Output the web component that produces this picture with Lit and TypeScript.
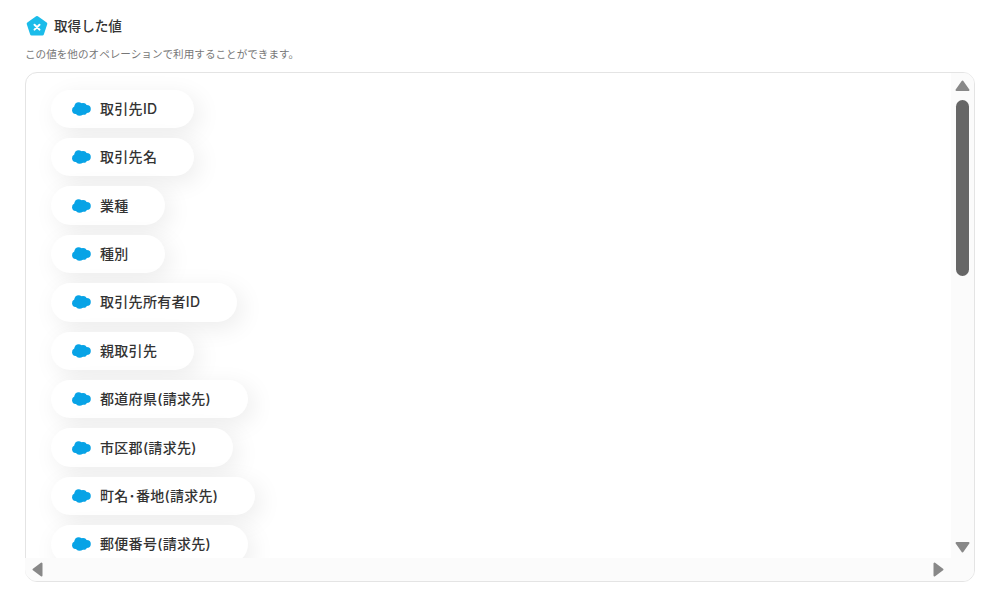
import { LitElement, html, css } from 'lit';
import { customElement } from 'lit/decorators.js';

const FIELDS = [
  '取引先ID',
  '取引先名',
  '業種',
  '種別',
  '取引先所有者ID',
  '親取引先',
  '都道府県(請求先)',
  '市区郡(請求先)',
  '町名･番地(請求先)',
  '郵便番号(請求先)',
];

const cloud = html`<svg class="cloud" viewBox="0 0 19 14" aria-hidden="true">
  <g fill="#08a3e6">
    <circle cx="6.6" cy="4.6" r="4.3"></circle>
    <circle cx="11" cy="4.8" r="3.9"></circle>
    <ellipse cx="14.6" cy="7" rx="4.2" ry="4"></ellipse>
    <ellipse cx="3.6" cy="8.2" rx="3.5" ry="3.7"></ellipse>
    <circle cx="7.6" cy="9.8" r="4"></circle>
    <circle cx="11.6" cy="9.4" r="3.4"></circle>
  </g>
</svg>`;

@customElement('app-root')
export class AppRoot extends LitElement {
  static styles = css`
    :host {
      display: block;
      height: 589px;
      overflow: hidden;
      background: #fff;
      color: #333;
      font-family: 'Inter', 'Noto Sans CJK JP', sans-serif;
      box-sizing: border-box;
      padding: 14px 24px 7px 25px;
    }

    .head {
      display: flex;
      align-items: center;
      gap: 6px;
      height: 24px;
      padding-left: 1px;
    }

    .logo {
      width: 22px;
      height: 22px;
      flex: none;
    }

    .title {
      font-size: 13.6px;
      font-weight: 500;
      line-height: 22px;
    }

    .sub {
      margin: 9px 0 0;
      font-size: 10.6px;
      line-height: 16px;
      color: #777;
    }

    .box {
      margin-top: 9px;
      height: 510px;
      box-sizing: border-box;
      border: 1px solid #e4e4e4;
      border-radius: 12px;
      display: grid;
      grid-template-columns: 1fr 23px;
      grid-template-rows: 1fr 23px;
      background: #fff;
    }

    .list {
      overflow: hidden;
      padding: 16.7px 0 0 25px;
      display: flex;
      flex-direction: column;
      align-items: flex-start;
      gap: 10px;
      min-height: 0;
    }

    .pill {
      flex: none;
      display: flex;
      align-items: center;
      gap: 9px;
      height: 38.4px;
      padding: 0 36.5px 0 21px;
      border-radius: 20px;
      background: #fff;
      box-shadow: 5px 6px 24px rgba(0, 0, 0, 0.08);
      font-size: 14px;
      font-weight: 500;
      letter-spacing: 0.3px;
      white-space: nowrap;
    }

    .pill span {
      padding-bottom: 2px;
    }

    .cloud {
      width: 19px;
      height: 14px;
      flex: none;
    }

    .vbar,
    .hbar,
    .corner {
      background: #fbfbfb;
      position: relative;
      z-index: 1;
    }

    .vbar {
      display: flex;
      flex-direction: column;
      align-items: center;
      padding: 7px 0 5px;
      grid-row: 1;
      grid-column: 2;
      border-top-right-radius: 10px;
      box-sizing: border-box;
    }

    .thumb {
      width: 13px;
      height: 176px;
      margin-top: 9px;
      border-radius: 7px;
      background: #666;
    }

    .spacer {
      flex: 1;
    }

    .hbar {
      grid-row: 2;
      grid-column: 1;
      margin-left: -1px;
      display: flex;
      align-items: center;
      justify-content: space-between;
      padding: 0 7px 1px 7px;
      border-bottom-left-radius: 12px;
    }

    .corner {
      grid-row: 2;
      grid-column: 2;
      border-bottom-right-radius: 11px;
    }

    .arrow {
      display: block;
      fill: #888;
      stroke: #888;
      stroke-linejoin: round;
      stroke-width: 2;
    }
  `;

  render() {
    return html`
      <div class="head">
        <svg class="logo" viewBox="0 0 22 22" aria-hidden="true">
          <path
            d="M11 2.5 L19.8 8.8 L16.4 19 L5.6 19 L2.2 8.8 Z"
            fill="#1bbcea"
            stroke="#1bbcea"
            stroke-width="3"
            stroke-linejoin="round"
          ></path>
          <path d="M8.5 9.8 L13.5 14.6 M13.5 9.8 L8.5 14.6" stroke="#fff" stroke-width="2" stroke-linecap="round"></path>
        </svg>
        <span class="title">取得した値</span>
      </div>
      <p class="sub">この値を他のオペレーションで利用することができます。</p>
      <div class="box">
        <div class="list">
          ${FIELDS.map((f) => html`<div class="pill">${cloud}<span>${f}</span></div>`)}
        </div>
        <div class="vbar">
          <svg class="arrow" width="15" height="11" viewBox="0 0 15 11"><path d="M7.5 1.5 L13.5 10 L1.5 10 Z"></path></svg>
          <div class="thumb"></div>
          <div class="spacer"></div>
          <svg class="arrow" width="15" height="11" viewBox="0 0 15 11"><path d="M1.5 1 L13.5 1 L7.5 9.5 Z"></path></svg>
        </div>
        <div class="hbar">
          <svg class="arrow" width="11" height="15" viewBox="0 0 11 15"><path d="M9.5 1.5 L9.5 13.5 L1.5 7.5 Z"></path></svg>
          <svg class="arrow" width="11" height="15" viewBox="0 0 11 15"><path d="M1.5 1.5 L1.5 13.5 L9.5 7.5 Z"></path></svg>
        </div>
        <div class="corner"></div>
      </div>
    `;
  }
}
